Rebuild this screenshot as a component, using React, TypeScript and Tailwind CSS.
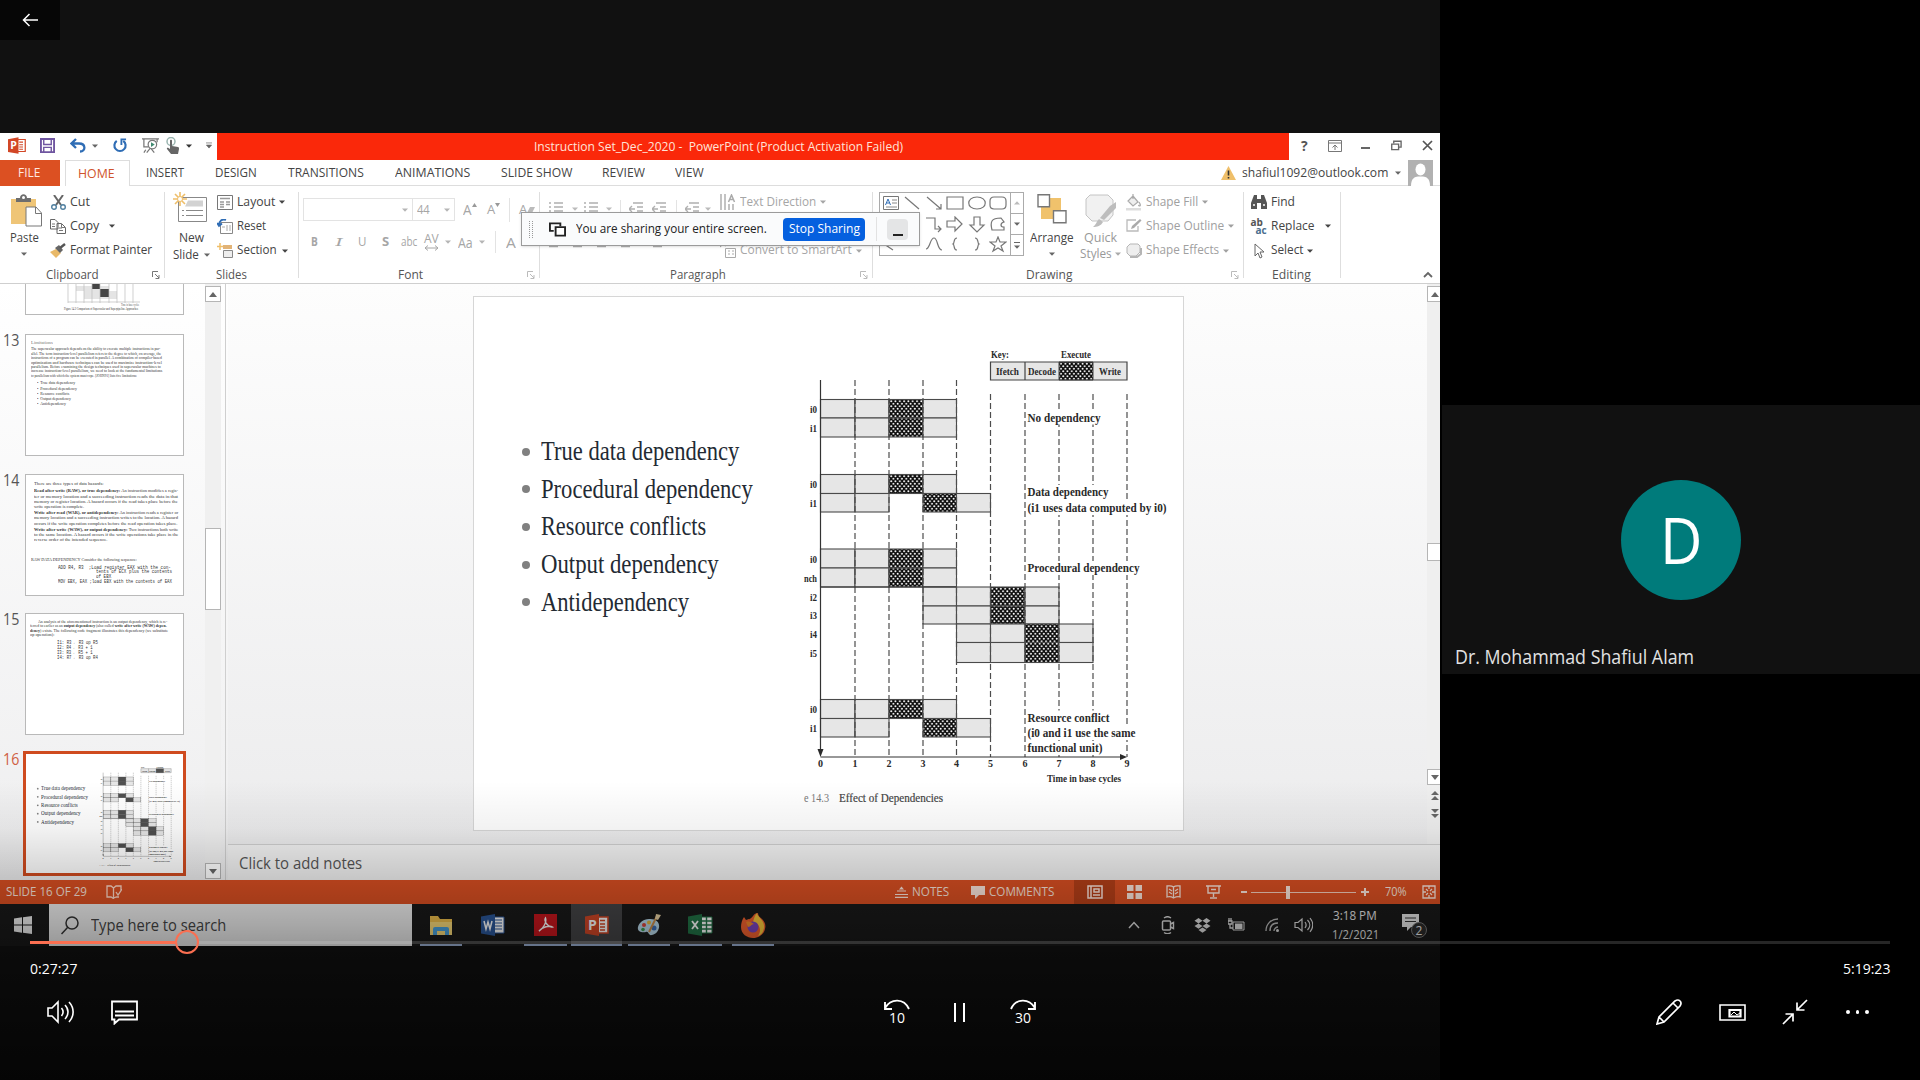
import React, { useLayoutEffect, useRef, useState } from "react";

type TProps = { w: number; c?: string; children: React.ReactNode };

/* Single line of text fitted to a known width. */
function T({ w, c = "", children }: TProps) {
  const ref = useRef<HTMLSpanElement>(null);
  const [k, setK] = useState(1);
  useLayoutEffect(() => {
    if (ref.current) setK(w / ref.current.offsetWidth);
  }, [w]);
  return (
    <span className={"block shrink-0 whitespace-nowrap " + c} style={{ width: w }}>
      <span ref={ref} className="inline-block origin-left" style={{ transform: `scaleX(${k})` }}>
        {children}
      </span>
    </span>
  );
}

type IProps = { w: number; h: number; c?: string; vb?: string; children: React.ReactNode };
function I({ w, h, c = "", vb, children }: IProps) {
  return (
    <svg width={w} height={h} viewBox={vb || `0 0 ${w} ${h}`} fill="none" className={"block shrink-0 " + c}>
      {children}
    </svg>
  );
}

function Caret({ c = "text-[#666]" }: { c?: string }) {
  return (
    <I w={6} h={4} c={c}>
      <path d="M0 .5h6L3 3.8z" fill="currentColor" />
    </I>
  );
}

function PptIcon({ w = 18, h = 17, c = "" }) {
  return (
    <I w={w} h={h} vb="0 0 24 22" c={c}>
      <path d="M12 3h11v16H12z" fill="#fff" stroke="#d24726" strokeWidth="1.6" />
      <path d="M15 6.500h5M15 10h5M15 13h5M15 16h5" stroke="#d24726" strokeWidth="1.5" />
      <path d="M0 2.500 14 0v22L0 19.500z" fill="#d24726" />
      <text x="3" y="16" fontSize="14" fontWeight="700" fill="#fff" fontFamily="Open Sans">P</text>
    </I>
  );
}

function TitleBar() {
  return (
    <div className="flex h-[27px] items-center bg-white">
      <div className="-mt-[2px] flex w-[217px] items-center">
        <PptIcon c="ml-[8px]" />
        <I w={15} h={15} vb="0 0 16 16" c="ml-[14px]">
          <path d="M1 1h14v14H1z" stroke="#6f55a0" strokeWidth="2" />
          <path d="M4 1v6h8V1M4 15v-5h8v5" stroke="#6f55a0" strokeWidth="1.500" />
        </I>
        <I w={16} h={15} c="ml-[15px]">
          <path d="M6 1 1.500 5.500 6 10M2 5.500h7c7 0 7 8 1 8" stroke="#2f6db5" strokeWidth="2.300" />
        </I>
        <span className="ml-[6px]"><Caret /></span>
        <I w={14} h={15} vb="0 0 15 15" c="ml-[15px]">
          <path d="M4 2.500A6 6 0 1 0 11 2.500" stroke="#2f6db5" strokeWidth="2.300" />
          <path d="M8 1h6M9 1v6" stroke="#2f6db5" strokeWidth="2" />
        </I>
        <I w={17} h={17} vb="0 0 18 17" c="ml-[15px]">
          <path d="M0 1.500h18M2 2v8h5M16 2v3M5 16l4-5 4 5M4 13l-2 3" stroke="#777" strokeWidth="1.300" />
          <circle cx="11" cy="7.500" r="4.500" stroke="#777" strokeWidth="1.300" fill="#fff" />
          <path d="M9.500 5v5l4-2.500z" fill="#3f8a70" />
        </I>
        <I w={14} h={17} c="ml-[7px]">
          <circle cx="5" cy="4.500" r="4" stroke="#9ab5b0" strokeWidth="1.500" />
          <path d="M4 3.500c0-1 2-1 2 0V9l6 1c1 0 1 1 1 2l-1 5H5l-4-5c-.5-1 .5-1.500 1.500-1L4 12z" fill="#666" />
        </I>
        <span className="ml-[6px]"><Caret c="text-[#333]" /></span>
        <I w={6} h={7} vb="0 0 7 7" c="ml-[14px]">
          <path d="M0 .500h7M.500 3h6L3.500 6.500z" stroke="#666" fill="#666" strokeWidth=".800" />
        </I>
      </div>
      <div className="flex h-full w-[1072px] items-center bg-[#fa280a]">
        <T w={369} c="ml-[317px] mt-[1px] text-[12.500px] text-[#ffe3d8]">Instruction Set_Dec_2020 -&nbsp; PowerPoint (Product Activation Failed)</T>
      </div>
      <div className="-mt-[2px] flex items-center">
        <T w={7} c="ml-[12px] text-[14px] font-bold leading-none text-[#555]">?</T>
        <I w={14} h={12} c="ml-[20px]">
          <path d="M.5.5h13v11H.5zM.5 3h13M7 10V5M4.500 7.500 7 5l2.500 2.500" stroke="#777" />
        </I>
        <div className="ml-[19px] mt-[5px] h-[2px] w-[9px] bg-[#666]" />
        <I w={11} h={11} vb="0 0 12 11" c="ml-[21px]">
          <path d="M3 3V.800h8v6.500H9M.800 4h7.500v6H.800z" stroke="#666" strokeWidth="1.500" />
        </I>
        <I w={11} h={11} c="ml-[20px]">
          <path d="m1 1 9 9M10 1l-9 9" stroke="#555" strokeWidth="1.700" />
        </I>
      </div>
    </div>
  );
}

function Tabs() {
  return (
    <div className="flex h-[26px] items-center bg-white text-[13px] text-[#444]">
      <div className="flex h-full w-[60px] items-center bg-[#dc5022] text-[#ffe9e0]">
        <T w={22} c="ml-[18px]">FILE</T>
      </div>
      <div className="ml-[5px] flex h-full w-[65px] items-center border-x border-t border-[#ddd] text-[#d0532b]">
        <T w={37} c="ml-[12px]">HOME</T>
      </div>
      <div className="flex h-full flex-1 items-center border-b border-[#ddd] pt-[1px]">
        <T w={38} c="ml-[16px]">INSERT</T>
        <T w={42} c="ml-[31px]">DESIGN</T>
        <T w={76} c="ml-[31px]">TRANSITIONS</T>
        <T w={75} c="ml-[31px]">ANIMATIONS</T>
        <T w={71} c="ml-[31px]">SLIDE SHOW</T>
        <T w={43} c="ml-[30px]">REVIEW</T>
        <T w={29} c="ml-[30px]">VIEW</T>
        <I w={15} h={14} c="ml-[517px]">
          <path d="M7.500 0 15 14H0z" fill="#efbf6a" />
          <path d="M7.500 4.500v5M7.500 11v1.600" stroke="#333" strokeWidth="1.600" />
        </I>
        <T w={146} c="-mt-[1px] ml-[6px]">shafiul1092@outlook.com</T>
        <span className="-mt-[1px] ml-[7px]"><Caret /></span>
        <I w={25} h={26} c="ml-[7px]">
          <path d="M0 0h25v26H0z" fill="#b1b1b1" />
          <ellipse cx="12.500" cy="9.500" rx="5" ry="6" fill="#fff" />
          <path d="M3 26c0-8 4-9 7-9.500h5c3 .5 7 1.500 7 9.500z" fill="#fff" />
        </I>
      </div>
    </div>
  );
}

function Group({ c, label, lw, lc, launcher, children }: { c: string; label: string; lw: number; lc: string; launcher?: string; children: React.ReactNode }) {
  return (
    <div className={"flex h-[97px] shrink-0 " + c}>
      <div className="flex min-w-0 flex-1 flex-col">
        <div className="flex h-[81px]">{children}</div>
        <div className="flex h-[16px] items-center text-[12.500px] leading-[16px] text-[#555]">
          <T w={lw} c={lc}>{label}</T>
          {launcher && (
            <I w={8} h={8} c={"ml-auto mr-[4px] " + launcher}>
              <path d="M.5 6V.5H6M3 3l4 4M7 4v3.500H3.500" stroke="currentColor" />
            </I>
          )}
        </div>
      </div>
      <div className="mt-[6px] h-[86px] w-px bg-[#dedede]" />
    </div>
  );
}

function Item({ w, text, caret, cc, children }: { w: number; text: string; caret?: boolean; cc?: string; children: React.ReactNode }) {
  return (
    <div className="flex h-[24.300px] items-center">
      <div className="mr-[4px] flex w-[16px] justify-center">{children}</div>
      <T w={w}>{text}</T>
      {caret && <span className={cc || "ml-[4px]"}><Caret c="text-current" /></span>}
    </div>
  );
}

const sunburst = "M7 0v14M0 7h14M2 2l10 10M12 2 2 12";

function ClipboardGroup() {
  return (
    <Group c="w-[165px]" label="Clipboard" lw={53} lc="ml-[46px]" launcher="text-[#777]">
      <div className="ml-[7px] flex w-[34px] flex-col items-center">
        <I w={31} h={33} c="ml-[4px] mt-[8px]">
          <path d="M0 5h25v25H0z" fill="#efc577" />
          <path d="M5 8V4h4c0-5 7-5 7 0h4v4z" fill="#6e6e6e" />
          <circle cx="12.500" cy="3.500" r="1.500" fill="#fff" />
          <path d="M15 13h10l5.500 6v13H15z" fill="#fff" stroke="#777" />
          <path d="M24.500 13v6.500H31" stroke="#777" />
        </I>
        <T w={29} c="mt-[2px] h-[18px] leading-[18px]">Paste</T>
        <span className="mt-[5px]"><Caret /></span>
      </div>
      <div className="ml-[9px] mt-[4px]">
        <Item w={20} text="Cut">
          <I w={15} h={15}>
            <path d="m3 0 7 10M12 0 5 10" stroke="#666" strokeWidth="2" />
            <circle cx="3" cy="12" r="2.300" stroke="#4f7f9f" strokeWidth="1.400" />
            <circle cx="12" cy="12" r="2.300" stroke="#4f7f9f" strokeWidth="1.400" />
          </I>
        </Item>
        <Item w={29} text="Copy" caret cc="ml-[10px]">
          <I w={16} h={15}>
            <path d="M.5.5H5l3 3V10H.5zM7 4.500h4.500l4 4v6H7z" fill="#fff" stroke="#666" />
            <path d="M2 5h3M2 7.500h3M9 9h3M9 11.500h4M11.500 5v3.500H15" stroke="#777" />
          </I>
        </Item>
        <Item w={82} text="Format Painter">
          <I w={16} h={15}>
            <path d="m0 9 6-3 5 4-5 5z" fill="#e9b968" />
            <path d="m5 5 4-3 4 5-3 3z" fill="#666" />
            <path d="m10 5 5-4" stroke="#555" strokeWidth="2.500" />
          </I>
        </Item>
      </div>
    </Group>
  );
}

function SlidesGroup() {
  return (
    <Group c="w-[134px]" label="Slides" lw={31} lc="ml-[51px]">
      <div className="ml-[8px] flex w-[34px] flex-col">
        <I w={34} h={31} c="mt-[6px]">
          <path d="M5.500 5.500h28v24h-28z" fill="#fff" stroke="#888" />
          <path d="M15 8.500h15v6H12z" fill="#d2d2d2" />
          <path d="M9 18.500h2M13 18.500h17M9 23.500h2M13 23.500h17" stroke="#888" />
          <path d={sunburst} stroke="#efbf6a" strokeWidth="1.600" />
          <circle cx="7" cy="7" r="2.500" fill="#fff" stroke="#efbf6a" />
        </I>
        <T w={25} c="ml-[6px] mt-[6px] h-[17px] leading-[18px]">New</T>
        <div className="flex items-center">
          <T w={26} c="h-[17px] leading-[18px]">Slide</T>
          <span className="ml-[5px]"><Caret /></span>
        </div>
      </div>
      <div className="ml-[10px] mt-[4px]">
        <Item w={38} text="Layout" caret>
          <I w={16} h={15}>
            <path d="M.5.500h15v14H.5z" fill="#fff" stroke="#777" />
            <path d="M3 3.500h10M3 7h4M9 7h4M3 9.500h4M9 9.500h4M3 12h4" stroke="#999" strokeWidth="1.300" />
          </I>
        </Item>
        <Item w={29} text="Reset">
          <I w={16} h={15}>
            <path d="M3.500 3.500h12v11h-12z" fill="#fff" stroke="#888" />
            <path d="M10 6v6M13 6v6M5 8h3" stroke="#aaa" />
            <path d="M9 1C5-.5 2 2 2 6M0 4l2 3 3-2.500" stroke="#2f6db5" strokeWidth="1.800" />
          </I>
        </Item>
        <Item w={40} text="Section" caret cc="ml-[5px]">
          <I w={16} h={16}>
            <path d="M6 3h9M6 5h9" stroke="#d99a4a" strokeWidth="1.500" />
            <path d="M6.500 7.500h9v7h-9z" stroke="#888" fill="#eee" />
            <path d="M3 0v7M0 3.500h6" stroke="#efbf6a" strokeWidth="1.500" />
          </I>
        </Item>
      </div>
    </Group>
  );
}

function FontGroup() {
  return (
    <Group c="w-[241px] text-[#a6a6a6]" label="Font" lw={25} lc="ml-[99px]" launcher="text-[#bbb]">
      <div className="ml-[4px] mt-[12px] flex flex-col">
        <div className="flex h-[23px] items-center">
          <div className="flex h-full w-[110px] items-center justify-end border border-[#e3e3e3] pr-[4px]"><Caret c="text-[#b5b5b5]" /></div>
          <div className="flex h-full w-[42px] items-center border-y border-r border-[#e3e3e3]">
            <T w={13} c="ml-[4px] text-[12px]">44</T>
            <span className="ml-[14px]"><Caret c="text-[#b5b5b5]" /></span>
          </div>
          <T w={9} c="ml-[8px] text-[15px]">A</T>
          <I w={5} h={4} c="mb-[9px]"><path d="M0 4 2.500 0 5 4z" fill="#999" /></I>
          <T w={8} c="ml-[10px] text-[13px]">A</T>
          <I w={5} h={4} c="mb-[9px]"><path d="M0 0h5L2.500 4z" fill="#999" /></I>
          <div className="ml-[9px] h-[24px] w-px bg-[#e3e3e3]" />
          <T w={8} c="ml-[9px] text-[13px]">A</T>
          <I w={8} h={6}><path d="M3 0h5L5 6H0z" fill="#bbb" /></I>
        </div>
        <div className="mt-[9px] flex h-[24px] items-center text-[13px]">
          <T w={7} c="ml-[8px] font-bold">B</T>
          <T w={7} c="ml-[17px] font-serif italic">I</T>
          <T w={8} c="ml-[16px] underline">U</T>
          <T w={7} c="ml-[16px] font-bold">S</T>
          <T w={16} c="ml-[12px] line-through">abc</T>
          <div className="ml-[7px] flex flex-col items-center">
            <T w={15} c="text-[12px] leading-[12px]">AV</T>
            <I w={15} h={6}><path d="M1 3h13M4 .5 1 3l3 2.500M11 .5 14 3l-3 2.500" stroke="#a6a6a6" /></I>
          </div>
          <span className="ml-[6px]"><Caret c="text-[#b5b5b5]" /></span>
          <T w={15} c="ml-[7px] text-[14px]">Aa</T>
          <span className="ml-[6px]"><Caret c="text-[#b5b5b5]" /></span>
          <div className="ml-[10px] h-[22px] w-px bg-[#e3e3e3]" />
          <T w={10} c="ml-[10px] text-[14px]">A</T>
        </div>
      </div>
    </Group>
  );
}

function Lines({ c, d = "M5 1h9M5 5h9M5 9h9M5 13h9M0 1h2M0 5h2M0 9h2M0 13h2" }: { c: string; d?: string }) {
  return (
    <I w={15} h={14} c={c}>
      <path d={d} stroke="#b0b0b0" strokeWidth="1.300" />
    </I>
  );
}

function ParagraphGroup() {
  const indent = "M4 1h10M8 5h6M8 9h6M4 13h10M6 7H0M3 4 0 7l3 3";
  const para = "M0 1h14M0 5h9M0 9h14M0 12.500h9";
  return (
    <Group c="w-[333px] text-[#a6a6a6]" label="Paragraph" lw={56} lc="ml-[130px]" launcher="text-[#bbb]">
      <div className="ml-[9px] mt-[15px] w-[168px]">
        <div className="flex h-[16px] items-center">
          <Lines c="" />
          <span className="ml-[8px]"><Caret c="text-[#bbb]" /></span>
          <Lines c="ml-[6px]" />
          <span className="ml-[7px]"><Caret c="text-[#bbb]" /></span>
          <div className="ml-[8px] h-[18px] w-px bg-[#e3e3e3]" />
          <Lines c="ml-[8px]" d={indent} />
          <Lines c="ml-[8px]" d={indent} />
          <div className="ml-[9px] h-[18px] w-px bg-[#e3e3e3]" />
          <Lines c="ml-[8px]" d={indent} />
          <span className="ml-[5px]"><Caret c="text-[#bbb]" /></span>
        </div>
        <div className="mt-[17px] flex h-[14px] items-center gap-[9px]">
          <Lines c="" d={para} />
          <Lines c="" d={para} />
          <Lines c="" d={para} />
          <Lines c="" d={para} />
          <Lines c="ml-[8px]" d={para} />
        </div>
      </div>
      <div className="ml-[3px] mt-[4px]">
        <Item w={76} text="Text Direction" caret>
          <I w={16} h={16}>
            <path d="M1 0v16M5 0v16M9 10v6M13 10v6" stroke="#aaa" strokeWidth="1.400" />
            <path d="m8.500 8 3-7 3 7M9.500 5.500h4" stroke="#aaa" strokeWidth="1.500" />
          </I>
        </Item>
        <div className="h-[24.300px]" />
        <Item w={112} text="Convert to SmartArt" caret>
          <I w={16} h={15}>
            <path d="M5.500 5.500h10v9h-10zM8 8h2M12 8h2M8 11h2M12 11h2" stroke="#aaa" />
            <path d="M0 4c1-4 4-4 6-1" stroke="#aaa" strokeWidth="2" />
          </I>
        </Item>
      </div>
    </Group>
  );
}

const shapes: string[][] = [
  ["", "M2 2 16 14", "M2 2l14 12M16 9v5h-5", "M1 2h16v12H1z", "M9 2c11 0 11 12 0 12S-2 2 9 2z", "M5 2h8q4 0 4 4v4q0 4-4 4H5q-4 0-4-4V6q0-4 4-4z"],
  ["M2 2v12", "M2 2h8v11h6", "M1 2h9v11h6M13 10l3 3-3 3", "M1 5h8V1l7 7-7 7v-4H1z", "M6 1h6v8h4l-7 7-7-7h4z", "M3 14h12v-3c-4 0-4-4 0-5L12 2C2 2 1 6 3 14z"],
  ["M5 2c8 0 8 6 0 8l6 4", "M2 2", "M1 13C5 13 5 2 9 2s3 12 8 12", "M11 2c-4 0-2 5-4 6 2 1 0 6 4 6", "M7 2c4 0 2 5 4 6-2 1 0 6-4 6", "m9 1 2 5h6l-5 4 2 5-5-3-5 3 2-5-5-4h6z"],
];

function DrawingGroup() {
  return (
    <Group c="w-[371px]" label="Drawing" lw={46} lc="ml-[153px]" launcher="text-[#bbb]">
      <div className="ml-[6px] mt-[6px] flex h-[64px] w-[145px] border border-[#ababab] bg-white">
        <div className="flex w-[130px] flex-col justify-between py-[2px]">
          {shapes.map((row, r) => (
            <div key={r} className="flex justify-between pl-[2px] pr-[3px]">
              {row.map((d, i) =>
                d ? (
                  <I key={i} w={18} h={17}><path d={d} stroke="#777" strokeWidth="1.200" /></I>
                ) : (
                  <I key={i} w={18} h={17}>
                    <path d="M1.500 1.500h15v13h-15z" stroke="#777" />
                    <path d="M3.500 10 6 4l2.500 6M4.500 8h3" stroke="#2f6db5" />
                    <path d="M10 5h5M10 8h5M4 12h11" stroke="#888" />
                  </I>
                )
              )}
            </div>
          ))}
        </div>
        <div className="flex flex-1 flex-col border-l border-[#ababab]">
          <div className="flex flex-1 items-center justify-center"><Caret c="rotate-180 text-[#bbb]" /></div>
          <div className="flex flex-1 items-center justify-center border-y border-[#ababab]"><Caret /></div>
          <div className="flex flex-1 flex-col items-center justify-center gap-[2px]">
            <div className="h-px w-[6px] bg-[#666]" />
            <Caret />
          </div>
        </div>
      </div>
      <div className="ml-[6px] flex w-[44px] flex-col items-center">
        <I w={30} h={30} c="mt-[8px]">
          <path d="M12 4h12v13H12zM4 13h12v12H4z" fill="#f0c26c" />
          <path d="M1 .700h11.500v12H1zM16.500 16.700H29v12H16.500z" fill="#fff" stroke="#777" strokeWidth="1.400" />
        </I>
        <T w={44} c="mt-[5px] h-[18px] leading-[18px]">Arrange</T>
        <span className="mt-[5px]"><Caret /></span>
      </div>
      <div className="ml-[6px] flex w-[44px] flex-col text-[#999]">
        <I w={32} h={35} c="ml-[5px] mt-[8px]">
          <path d="M5 1h18l5 5v15l-5 6H7l-6-6V5z" fill="#f1f1f1" stroke="#c4c4c4" />
          <path d="M31 8v6L19 26l-4-2 10-12zM14 25l4 3c-2 4-6 5-10 5 3-2 3-5 6-8z" fill="#bdbdbd" />
        </I>
        <T w={33} c="ml-[4px] h-[17px] leading-[18px]">Quick</T>
        <div className="-mt-[1px] flex items-center">
          <T w={32} c="h-[17px] leading-[18px]">Styles</T>
          <span className="ml-[3px]"><Caret c="text-[#aaa]" /></span>
        </div>
      </div>
      <div className="ml-[2px] mt-[4px] text-[#a0a0a0]">
        <Item w={52} text="Shape Fill" caret>
          <I w={16} h={17}>
            <path d="m7 2 5 6-5 4-5-5zM7 5V0M13 8c3 4 0 5-.5 3" stroke="#aaa" strokeWidth="1.200" fill="#eee" />
            <path d="M0 14h15v2.500H0z" fill="#ddd" />
          </I>
        </Item>
        <Item w={78} text="Shape Outline" caret>
          <I w={16} h={15}>
            <path d="M12 7v5H1V1h9" stroke="#bbb" strokeWidth="1.300" />
            <path d="m5 10 1-3 8-7 1.500 1.500L8 9z" fill="#aaa" />
          </I>
        </Item>
        <Item w={73} text="Shape Effects" caret>
          <I w={16} h={15}>
            <path d="M4 1h8l2 2v6l-4 4H4l-3-3V4z" fill="#eee" stroke="#b5b5b5" />
            <path d="M15 5v6l-4 3H4" stroke="#b5b5b5" strokeWidth="2" />
          </I>
        </Item>
      </div>
    </Group>
  );
}

function EditingGroup() {
  return (
    <Group c="w-[97px]" label="Editing" lw={39} lc="ml-[28px]">
      <div className="ml-[7px] mt-[4px]">
        <Item w={24} text="Find">
          <I w={16} h={14}>
            <path d="M3 0h3v4h4V0h3l3 8v6h-6V8H6v6H0V8z" fill="#555" />
            <path d="M2 10h2M12 10h2" stroke="#fff" strokeWidth="1.500" />
          </I>
        </Item>
        <Item w={44} text="Replace" caret cc="ml-[10px]">
          <div className="text-[10px] font-bold leading-[8px] text-[#555]">
            <div className="-ml-[1px]">ab</div>
            <div className="pl-[4px] text-[#4c6f8f]">ac</div>
          </div>
        </Item>
        <Item w={33} text="Select" caret cc="ml-[3px]">
          <I w={10} h={16}>
            <path d="M1 1v12l3-3 2 5 2-1-2-5h4z" stroke="#666" fill="#fff" />
          </I>
        </Item>
      </div>
    </Group>
  );
}

function ShareBar() {
  return (
    <div className="absolute left-[521px] top-[79px] flex h-[34px] w-[399px] items-center border border-[#9b9b9b] bg-[#fafbfc] shadow-sm">
      <div className="ml-[7px] h-[17px] w-[4px] border-x border-dotted border-[#999]" />
      <I w={17} h={15} vb="0 0 18 15" c="ml-[16px]">
        <path d="M12 4V1H1v8h4" stroke="#222" strokeWidth="2" />
        <path d="M7 5h10v9H7z" stroke="#222" strokeWidth="2" fill="#fff" />
      </I>
      <T w={191} c="ml-[10px] text-[12.500px] font-medium text-[#222]">You are sharing your entire screen.</T>
      <div className="ml-[16px] flex h-[23px] w-[82px] items-center justify-center rounded-[4px] bg-[#0560df] text-white">
        <T w={71} c="text-[12.500px]">Stop Sharing</T>
      </div>
      <div className="ml-[11px] h-[24px] w-px bg-[#e2e2e2]" />
      <div className="ml-[10px] flex h-[21px] w-[21px] items-end justify-center rounded-[4px] bg-[#e4e5e6] pb-[4px]">
        <div className="h-[2px] w-[10px] bg-[#222]" />
      </div>
    </div>
  );
}

const X = [820.5, 855, 889, 923, 956.5, 990.5, 1025, 1059, 1093, 1127];
/* start column, top, bottom, whether execute is delayed by one cycle */
const bars: [number, number, number, boolean][] = [
  [0, 399.5, 418, false], [0, 418, 437, false],
  [0, 474.5, 493.5, false], [0, 493.5, 512, true],
  [0, 549, 568, false], [0, 568, 587, false],
  [3, 587, 606, false], [3, 606, 624, false],
  [4, 624, 642.5, false], [4, 642.5, 662.5, false],
  [0, 699.5, 718.5, false], [0, 718.5, 737, true],
];
const rowLabels: [string, number][] = [["i0", 412.5], ["i1", 431.5], ["i0", 487.5], ["i1", 506.5], ["i0", 563], ["nch", 582], ["i2", 600.5], ["i3", 619], ["i4", 638], ["i5", 656.5], ["i0", 713], ["i1", 731.5]];
const notes: [string, number, number][] = [
  ["No dependency", 421.5, 73], ["Data dependency", 496, 81], ["(i1 uses data computed by i0)", 512, 139],
  ["Procedural dependency", 572, 112], ["Resource conflict", 721.5, 82], ["(i0 and i1 use the same", 737, 108], ["functional unit)", 752, 75],
];

function Chart() {
  return (
    <svg width="710" height="534" viewBox="473 296 710 534" className="absolute left-0 top-0" fontFamily="Liberation Serif" fontWeight="700" fontSize="11" fill="#2a2a2a">
      <defs>
        <pattern id="weave" width="4.300" height="5" patternUnits="userSpaceOnUse">
          <rect width="4.300" height="5" fill="#0c0c0c" />
          <ellipse cx="1.100" cy="1.250" rx=".95" ry="1" fill="#fff" />
          <ellipse cx="3.250" cy="3.750" rx=".95" ry="1" fill="#fff" />
        </pattern>
      </defs>
      {bars.map(([s, y0, y1, d], i) => {
        const e = s + 2 + (d ? 1 : 0);
        return (
          <g key={i} stroke="#4a4a4a" strokeWidth="1.100" fill="#e6e6e6">
            <rect x={X[s]} y={y0} width={X[s + 1] - X[s]} height={y1 - y0} />
            <rect x={X[s + 1]} y={y0} width={X[s + 2] - X[s + 1]} height={y1 - y0} />
            <rect x={X[e]} y={y0} width={X[e + 1] - X[e]} height={y1 - y0} fill="url(#weave)" />
            <rect x={X[e + 1]} y={y0} width={X[e + 2] - X[e + 1]} height={y1 - y0} />
          </g>
        );
      })}
      {X.slice(1).map((x, i) => (
        <path key={x} d={`M${x} ${i < 4 ? 380 : 394}V757`} stroke="#4d4d4d" strokeWidth="1.200" strokeDasharray="6 3" />
      ))}
      <path d="M820.500 380V753M820.500 757H1122M820.500 587H956" stroke="#333" strokeWidth="1.200" />
      <path d="m817.500 749 3 8 3-8zM1120 754l7 3-7 3z" />
      {notes.map(([t, y, w]) => (
        <g key={t}>
          <rect x="1027.500" y={y - 11} width={w} height="14" fill="#fff" />
          <text x="1027.500" y={y} fontSize="12.500" textLength={w} lengthAdjust="spacingAndGlyphs">{t}</text>
        </g>
      ))}
      {rowLabels.map(([t, y]) => (
        <text key={y} x={t === "nch" ? 804 : 810} y={y} textLength={t === "nch" ? 13 : 7} lengthAdjust="spacingAndGlyphs">{t}</text>
      ))}
      {X.map((x, i) => <text key={i} x={x} y="767" textAnchor="middle" fontSize="10">{i}</text>)}
      <text x="991" y="357.500" textLength="18" lengthAdjust="spacingAndGlyphs">Key:</text>
      <text x="1061" y="357.500" textLength="30" lengthAdjust="spacingAndGlyphs">Execute</text>
      <path d="M990.500 362H1127v18H990.500zM1025 362v18" fill="#e6e6e6" stroke="#444" strokeWidth="1.200" />
      <path d="M1059 362h34v18h-34z" fill="url(#weave)" stroke="#444" />
      <text x="996" y="375" textLength="23" lengthAdjust="spacingAndGlyphs">Ifetch</text>
      <text x="1028" y="375" textLength="28" lengthAdjust="spacingAndGlyphs">Decode</text>
      <text x="1099" y="375" textLength="22" lengthAdjust="spacingAndGlyphs">Write</text>
      <text x="1047" y="782" textLength="74" lengthAdjust="spacingAndGlyphs">Time in base cycles</text>
      <g fontWeight="400" fontSize="12">
        <text x="804" y="801.500" fill="#777" textLength="25" lengthAdjust="spacingAndGlyphs">e 14.3</text>
        <text x="839" y="801.500" fill="#444" stroke="#444" strokeWidth=".2" textLength="104" lengthAdjust="spacingAndGlyphs">Effect of Dependencies</text>
      </g>
    </svg>
  );
}

const bullets: [string, number][] = [["True data dependency", 198], ["Procedural dependency", 212], ["Resource conflicts", 165], ["Output dependency", 178], ["Antidependency", 148]];

function Slide() {
  return (
    <div className="relative h-[534px] w-[710px] bg-white">
      <Chart />
      <ul className="pl-[49px] pt-[137px] font-['Liberation_Serif',serif] text-[27px] text-[#232a33]">
        {bullets.map(([t, w]) => (
          <li key={t} className="flex h-[37.600px] items-center">
            <div className="mr-[11px] size-[8px] rounded-full bg-[#808080]" />
            <T w={w} c="leading-none">{t}</T>
          </li>
        ))}
      </ul>
    </div>
  );
}

const s13: [string, number][] = [
  ["The superscalar approach depends on the ability to execute multiple instructions in par-", 129],
  ["allel. The term instruction-level parallelism refers to the degree to which, on average, the", 130],
  ["instructions of a program can be executed in parallel. A combination of compiler-based", 131],
  ["optimization and hardware techniques can be used to maximize instruction-level", 131],
  ["parallelism. Before examining the design techniques used in superscalar machines to", 130],
  ["increase instruction-level parallelism, we need to look at the fundamental limitations", 131],
  ["to parallelism with which the system must cope. [JOHN91] lists five limitations:", 106],
];
const s14: [string, string, number][] = [
  ["Read after write (RAW), or true dependency:", " An instruction modifies a regis-", 144],
  ["", "ter or memory location and a succeeding instruction reads the data in that", 144],
  ["", "memory or register location. A hazard occurs if the read takes place before the", 144],
  ["", "write operation is complete.", 50],
  ["Write after read (WAR), or antidependency:", " An instruction reads a register or", 144],
  ["", "memory location and a succeeding instruction writes to the location. A hazard", 144],
  ["", "occurs if the write operation completes before the read operation takes place.", 143],
  ["Write after write (WAW), or output dependency:", " Two instructions both write", 144],
  ["", "to the same location. A hazard occurs if the write operations take place in the", 144],
  ["", "reverse order of the intended sequence.", 73],
];

function Row({ n, c, on, children }: { n: string; c: string; on?: boolean; children?: React.ReactNode }) {
  return (
    <div className={"flex shrink-0 " + c}>
      <div className={"w-[23px] pl-[3px] " + (on ? "text-[#cf6043]" : "text-[#555]")}>
        <T w={16} c={"text-[16px] leading-none " + (on ? "" : "-mt-[2px]")}>{n}</T>
      </div>
      {on ? (
        <div className="h-[125px] w-[163px] overflow-hidden border-[3px] border-[#cf4b1f] bg-white">{children}</div>
      ) : (
        <div className="ml-[2px] h-[122px] w-[159px] overflow-hidden border border-[#b9b9b9] bg-white font-['Liberation_Serif',serif] text-[4.500px] leading-[4.400px] text-[#333]">
          {children}
        </div>
      )}
    </div>
  );
}

function ScrollButton({ c = "", up }: { c?: string; up?: boolean }) {
  return (
    <div className={"flex h-[16px] w-[16px] items-center justify-center border border-[#b5b5b5] bg-white " + c}>
      <I w={8} h={5} c={up ? "" : "rotate-180"}><path d="M0 5 4 0l4 5z" fill="#666" /></I>
    </div>
  );
}

function Thumbnails() {
  return (
    <div className="flex w-[228px] shrink-0 bg-linear-to-b from-white to-[#eeeeef]">
      <div className="flex w-[205px] flex-col overflow-hidden">
        <div className="ml-[25px] h-[31px] w-[159px] overflow-hidden border-x border-b border-[#b9b9b9] bg-white">
          <I w={157} h={30}>
            <path d="M50 2h33v5H50zM58 7h33v8H58z" fill="#e4e4e4" />
            <path d="M66 0h8v5h-8zM74 5h9v8h-9z" fill="#444" />
            <path d="M42 0v19M50 0v19M58 0v19M66 0v19M74 0v19M83 0v19M91 0v19M99 0v19M107 0v19M42 18h72" stroke="#bbb" strokeWidth=".7" />
            <text x="95" y="22" fontSize="4" fill="#555" fontFamily="Liberation Serif" textLength="18" lengthAdjust="spacingAndGlyphs">Time in base cycles</text>
            <text x="38" y="26" fontSize="4" fill="#333" fontFamily="Liberation Serif" textLength="74" lengthAdjust="spacingAndGlyphs">Figure 14.2 Comparison of Superscalar and Superpipeline Approaches</text>
          </I>
        </div>
        <Row n="13" c="mt-[19px]">
          <div className="px-[5px] pt-[6px]">
            <T w={22} c="mb-[2px] text-[#777]">Limitations</T>
            {s13.map(([t, w]) => <T key={t} w={w}>{t}</T>)}
            <div className="ml-[6px] mt-[2px] leading-[5.300px]">
              <T w={38}>•&nbsp; True data dependency</T>
              <T w={40}>•&nbsp; Procedural dependency</T>
              <T w={32}>•&nbsp; Resource conflicts</T>
              <T w={34}>•&nbsp; Output dependency</T>
              <T w={29}>•&nbsp; Antidependency</T>
            </div>
          </div>
        </Row>
        <Row n="14" c="mt-[18px]">
          <div className="pl-[8px] pt-[7px]">
            <T w={69} c="mb-[2px]">There are three types of data hazards:</T>
            {s14.map(([b, t, w]) => (
              <T key={t} w={w} c={b ? "mt-[1px] leading-[5.200px]" : "leading-[5.200px]"}><b>{b}</b>{t}</T>
            ))}
            <T w={106} c="-ml-[3px] mt-[16px]">RAW DATA DEPENDENCY Consider the following sequence:</T>
            <div className="ml-[24px] mt-[3px] font-['Liberation_Mono',monospace] leading-[4.600px]">
              <T w={113}>ADD R4, R3&nbsp; ;Load register EAX with the con-</T>
              <T w={76} c="ml-[38px]">tents of ECX plus the contents</T>
              <T w={15} c="ml-[38px]">of EBX</T>
              <T w={114}>MOV EBX, EAX ;load EBX with the contents of EAX</T>
            </div>
          </div>
        </Row>
        <Row n="15" c="mt-[17px]">
          <div className="pl-[4px] pt-[6px]">
            <T w={129} c="ml-[8px]">An analysis of the aforementioned instruction is an output dependency, which is re-</T>
            <T w={137}>ferred to earlier as an <b>output dependency</b> (also called <b>write after write (WAW) depen-</b></T>
            <T w={138}><b>dency</b>) exists. The following code fragment illustrates this dependency (we substitute</T>
            <T w={24}>op operation):</T>
            <div className="ml-[27px] mt-[2px] font-['Liberation_Mono',monospace] leading-[5.200px]">
              <T w={41}>I1: R3 ← R3 op R5</T>
              <T w={36}>I2: R4 ← R3 + 1</T>
              <T w={36}>I3: R3 ← R5 + 1</T>
              <T w={41}>I4: R7 ← R3 op R4</T>
            </div>
          </div>
        </Row>
        <Row n="16" c="mt-[16px]" on>
          <div className="h-[534px] w-[710px] origin-top-left scale-[0.222]"><Slide /></div>
        </Row>
      </div>
      <div className="flex w-[16px] flex-col bg-[#f0f0f0] pt-[2px]">
        <ScrollButton up />
        <div className="mt-[226px] h-[82px] border border-[#b5b5b5] bg-white" />
        <ScrollButton c="mt-[253px]" />
      </div>
      <div className="ml-[4px] w-px bg-[#cfcfcf]" />
    </div>
  );
}

function Editor() {
  return (
    <div className="flex min-w-0 flex-1 flex-col">
      <div className="flex h-[561px] border-b border-[#cfcfcf] bg-linear-to-b from-[#fdfdfd] to-[#ececed]">
        <div className="ml-[246px] mt-[13px] h-[533px] w-[709px] overflow-hidden shadow-[0_0_0_1px_#d6d6d6]">
          <div className="-ml-[1px] -mt-[1px]"><Slide /></div>
        </div>
        <div className="ml-auto flex w-[13px] flex-col bg-[#efefef] pt-[2px]">
          <ScrollButton up />
          <div className="mt-[241px] h-[18px] w-[16px] border border-[#b5b5b5] bg-white" />
          <ScrollButton c="mt-[208px]" />
          <I w={14} h={12} c="mt-[5px]"><path d="m4 5 4-4 4 4zM4 10l4-4 4 4z" fill="#666" /></I>
          <I w={14} h={12} c="mt-[6px]"><path d="m4 1 4 4 4-4zM4 6l4 4 4-4z" fill="#666" /></I>
        </div>
      </div>
      <div className="flex flex-1 items-center bg-[#f2f2f2] text-[16px] text-[#555]">
        <T w={123} c="ml-[11px]">Click to add notes</T>
      </div>
    </div>
  );
}

function StatusBar() {
  return (
    <div className="flex h-[24px] items-center bg-[#da4f22] text-[12px] text-[#fbe5db]">
      <T w={81} c="ml-[6px]">SLIDE 16 OF 29</T>
      <I w={16} h={14} c="ml-[19px]">
        <path d="M7.500 3 5 1H1v11h4l2.500 1.500zM7.500 3 10 1h5v5M7.500 13l3-1H13M10 7l2 3 4-6" stroke="#ffd9c8" strokeWidth="1.300" />
      </I>
      <I w={13} h={12} c="ml-[773px]">
        <path d="m4 3.500 2.500-3 2.500 3z" fill="#fbe5db" />
        <path d="M2 5h9M0 8.500h13M0 11.300h13" stroke="#fbe5db" strokeWidth="1.200" />
      </I>
      <T w={37} c="ml-[4px]">NOTES</T>
      <I w={14} h={13} c="ml-[22px]"><path d="M0 0h14v9H8l-4 4V9H0z" fill="#fbe5db" /></I>
      <T w={65} c="ml-[4px]">COMMENTS</T>
      <div className="ml-[20px] flex h-full w-[41px] items-center justify-center bg-[#b53f18]">
        <I w={16} h={14}><path d="M1 1h14v12H1zM4 1v12M7 4h5v3H7zM6 10h7" stroke="#fbe5db" strokeWidth="1.500" /></I>
      </div>
      <I w={15} h={14} c="ml-[12px]"><path d="M0 0h6.500v6H0zM8.500 0H15v6H8.500zM0 8h6.500v6H0zM8.500 8H15v6H8.500z" fill="#fbe5db" /></I>
      <I w={15} h={14} c="ml-[24px]"><path d="M7.500 2C5 0 3 1 1 1v11c3-1 5 0 6.500 1 2-1 4-2 6.500-1V1c-2 0-4-1-6.500 1v11M3 4l3 2M3 7l3 2M12 4 9 6M12 7 9 9" stroke="#fbe5db" strokeWidth="1.300" /></I>
      <I w={15} h={14} c="ml-[25px]"><path d="M0 1h15M2 1v7h11V1M7.500 8v4M4 13h7M5 4.500h5" stroke="#fbe5db" strokeWidth="1.400" /></I>
      <div className="ml-[20px] h-[2px] w-[6px] bg-[#fbe5db]" />
      <div className="ml-[4px] flex h-[13px] w-[105px] items-center">
        <div className="h-px w-[35px] bg-[#f6cdbc]" />
        <div className="h-[13px] w-[4px] bg-[#fbe5db]" />
        <div className="h-px flex-1 bg-[#f6cdbc]" />
      </div>
      <I w={8} h={8} c="ml-[5px]"><path d="M4 0v8M0 4h8" stroke="#fbe5db" strokeWidth="2" /></I>
      <T w={22} c="ml-[16px]">70%</T>
      <I w={14} h={14} c="ml-[15px]"><path d="M1 1h12v12H1zM7 1v3M7 10v3M1 7h3M10 7h3M4 4l2 2M10 4 8 6M4 10l2-2M10 10 8 8" stroke="#fbe5db" strokeWidth="1.300" /></I>
    </div>
  );
}

function TaskApp({ c, line, children }: { c: string; line?: string; children: React.ReactNode }) {
  return (
    <div className={"flex h-full shrink-0 flex-col items-center justify-between " + c}>
      <div className="flex h-[40px] items-center pt-[2px]">{children}</div>
      <div className={"h-[2px] w-full " + (line ?? "bg-[#9fb4d8]")} />
    </div>
  );
}

function Taskbar() {
  return (
    <div className="flex h-[42px] items-center bg-[#191919] text-[#e8e8e8]">
      <I w={18} h={18} c="ml-[14px]">
        <path d="M0 2.500 8 1.300v7.200H0zM9 1.200 18 0v8.500H9zM0 9.500h8v7.200L0 15.500zM9 9.500h9V18l-9-1.200z" fill="#f0f0f0" />
      </I>
      <div className="ml-[17px] flex h-full w-[363px] items-center bg-[#efefef] text-[16px] text-[#444]">
        <I w={18} h={19} c="ml-[12px]">
          <circle cx="11" cy="7" r="6" stroke="#333" strokeWidth="1.500" />
          <path d="m7 11-6.500 7" stroke="#333" strokeWidth="1.500" />
        </I>
        <T w={135} c="ml-[12px]">Type here to search</T>
      </div>
      <TaskApp c="ml-[8px] w-[42px]">
        <I w={24} h={21}>
          <path d="M1 1h8l2 3h12v16H1z" fill="#f0c04c" /><path d="M1 7h22v13H1z" fill="#fbdc7a" />
          <path d="M4 20v-6q0-2 2-2h12q2 0 2 2v6h-4v-4H8v4z" fill="#4aa3df" />
        </I>
      </TaskApp>
      <TaskApp c="ml-[10px] w-[42px]" line="bg-transparent">
        <I w={24} h={22}>
          <path d="M12 3h11v16H12z" fill="#fff" stroke="#2b579a" /><path d="M14 6h7M14 9h7M14 12h7M14 15h7" stroke="#2b579a" />
          <path d="M0 2.500 14 0v22L0 19.500z" fill="#2b579a" />
          <path d="m3 7 2 8 2-7 2 7 2-8" stroke="#fff" strokeWidth="1.500" />
        </I>
      </TaskApp>
      <TaskApp c="ml-[10px] w-[43px]">
        <I w={23} h={22}>
          <path d="M0 0h23v22H0z" fill="#c8161d" />
          <path d="M5 17c4-2 8-9 6.500-13-2 3 3 10 7 9-3-2-10 0-13.500 4z" stroke="#fff" strokeWidth="1.400" />
        </I>
      </TaskApp>
      <div className="ml-[4px] h-full bg-[#444446]"><TaskApp c="w-[51px]"><PptIcon w={24} h={22} /></TaskApp></div>
      <TaskApp c="ml-[6px] w-[42px]">
        <I w={25} h={23}>
          <path d="M12 5c14-1 12 14 3 16-4 1-3-4-6-3-5 1-9-1-8-5s5-8 11-8z" fill="#b9d9ea" />
          <circle cx="7" cy="11" r="2" fill="#d8453b" /><circle cx="12" cy="8.500" r="2" fill="#e8b93c" /><circle cx="6" cy="15.500" r="1.800" fill="#3d9b52" /><circle cx="17" cy="14" r="2.500" fill="#3b6fb8" />
          <path d="m12 18 8-16" stroke="#c98c4a" strokeWidth="2" /><path d="m18 5 1-5 5 1-3 5z" fill="#e9d3a4" />
        </I>
      </TaskApp>
      <TaskApp c="ml-[9px] w-[43px]">
        <I w={25} h={22}>
          <path d="M13 3h11v16H13z" fill="#fff" stroke="#217346" /><path d="M13 7h11M13 11h11M13 15h11M18.500 3v16" stroke="#217346" strokeWidth="1.400" />
          <path d="M0 2.500 14 0v22L0 19.500z" fill="#217346" />
          <path d="m4 7 6 8M10 7l-6 8" stroke="#fff" strokeWidth="1.800" />
        </I>
      </TaskApp>
      <TaskApp c="ml-[10px] w-[42px]">
        <I w={26} h={25}>
          <path d="M13 3c1-2 3-3 5-3 0 3 2 4 4 6 3 3 4 6 3 10-1 5-6 9-12 9S1 21 1 14c0-4 1-7 3-10l2 3c2-1 4 0 7-4z" fill="#f5622f" />
          <path d="M17 0c0 4 8 7 7 15-1 5-3 7-6 8 4-6 2-12-5-14 1-4 2-7 4-9z" fill="#fcc93b" />
          <circle cx="13" cy="14" r="5.500" fill="#7b45c0" /><path d="M6 9c3-1 5 0 8 2-3 0-3 3-6 3z" fill="#f88a2a" />
        </I>
      </TaskApp>
      <I w={12} h={8} c="ml-[354px]"><path d="m1 7 5-5.500L11 7" stroke="#ddd" strokeWidth="1.500" /></I>
      <I w={14} h={18} c="ml-[21px]">
        <rect x="1.500" y="5" width="8" height="9" rx="1" stroke="#ddd" strokeWidth="1.500" /><path d="m9.500 8 3-1.500v6L9.500 11M3 2c2-1.500 5-1.500 7 0M3 16.500c2 1.500 5 1.500 7 0" stroke="#ddd" strokeWidth="1.400" />
      </I>
      <I w={17} h={15} c="ml-[19px]"><path d="m4.500 0 4 2.700-4 2.700-4-2.700zM12.500 0l4 2.700-4 2.700-4-2.700zM4.500 5.400l4 2.700-4 2.700-4-2.700zM12.500 5.400l4 2.700-4 2.700-4-2.700zM8.500 9.500l4 2.500-4 2.700-4-2.700z" fill="#ddd" /></I>
      <I w={17} h={14} c="ml-[17px]">
        <path d="M5 4h11v8H5z" stroke="#ddd" /><path d="M7 5.500h7.500V11H7z" fill="#ddd" /><path d="M0 3h4v3H0zM2 6v4h3M1 0v3M3 0v3" stroke="#ddd" strokeWidth="1.300" />
      </I>
      <I w={14} h={14} c="ml-[20px]">
        <path d="M1 13C1 6 6 1 13 1M5 13c0-5 3-8 8-8M9 13c0-2 2-4 4-4" stroke="#bbb" strokeWidth="1.400" /><circle cx="12.500" cy="12.500" r="1.500" fill="#ddd" />
      </I>
      <I w={19} h={16} c="ml-[15px]">
        <path d="M1 5.500h3L8 2v12l-4-3.500H1zM11 5c1.500 2 1.500 4 0 6M13.500 3c3 3 3 7 0 10M16 1c4 5 4 9 0 14" stroke="#ddd" strokeWidth="1.200" />
      </I>
      <div className="ml-[20px] text-[13px] leading-[19px]">
        <T w={44}>3:18 PM</T>
        <T w={47} c="-ml-[1px]">1/2/2021</T>
      </div>
      <I w={26} h={25} c="ml-[23px] mt-[3px]">
        <path d="M0 0h17v13H9l-4 4v-4H0z" fill="#e4e4e4" /><path d="M3 4h11M3 7.500h11" stroke="#333" strokeWidth="1.200" />
        <circle cx="17" cy="16" r="7.500" fill="#2b2b2b" stroke="#777" />
        <text x="17" y="20.500" fontSize="12" textAnchor="middle" fill="#eee" fontFamily="Open Sans">2</text>
      </I>
    </div>
  );
}

function SharedScreen() {
  return (
    <div className="relative flex h-[813px] w-[1440px] flex-col overflow-hidden text-[12.500px] text-[#444]">
      <TitleBar />
      <Tabs />
      <div className="flex h-[98px] border-b border-[#cfcfcf] bg-white">
        <ClipboardGroup />
        <SlidesGroup />
        <FontGroup />
        <ParagraphGroup />
        <DrawingGroup />
        <EditingGroup />
        <I w={10} h={7} c="ml-[82px] mt-[85px]"><path d="m1 6 4-4 4 4" stroke="#666" strokeWidth="1.800" /></I>
      </div>
      <div className="flex h-[596px]">
        <Thumbnails />
        <Editor />
      </div>
      <StatusBar />
      <Taskbar />
      <ShareBar />
    </div>
  );
}

function Controls() {
  return (
    <div className="absolute bottom-0 left-0 h-[152px] w-full pt-[2px] text-[14px] text-white">
      <div className="flex h-[24px] items-center px-[30px]">
        <div className="h-[3px] w-[145px] bg-[#fb6f51]" />
        <div className="size-[24px] shrink-0 rounded-full border-2 border-[#fb6f51]" />
        <div className="h-[3px] flex-1 bg-white/15" />
      </div>
      <div className="mt-[4px] flex h-[20px] items-center justify-between pl-[30px] pr-[30px]">
        <T w={47}>0:27:27</T>
        <T w={47}>5:19:23</T>
      </div>
      <div className="mt-[14px] flex h-[40px] items-center">
        <I w={28} h={24} c="ml-[47px]">
          <path d="M1 8h4l6-6v20l-6-6H1zM14.500 8c2 2.500 2 5.500 0 8M18 5c4 4 4 10 0 14M22 2c5.500 6 5.500 14 0 20" stroke="#fff" strokeWidth="1.600" />
        </I>
        <I w={27} h={25} c="ml-[36px]">
          <path d="M1 1.500h25v18H8l-4.500 4v-4H1z" stroke="#fff" strokeWidth="1.800" />
          <path d="M4 11.500h19M4 15.500h19" stroke="#fff" strokeWidth="2" />
        </I>
        <I w={28} h={30} c="ml-[745px] mt-[4px]">
          <path d="M2 9C8-1 21-1 26 10M2 3v7h7" stroke="#fff" strokeWidth="1.900" />
          <text x="14" y="24" fontSize="15" textAnchor="middle" fill="#fff" fontFamily="Open Sans" textLength="16" lengthAdjust="spacingAndGlyphs">10</text>
        </I>
        <div className="ml-[43px] flex h-[19px] w-[11px] justify-between">
          <div className="w-[2px] bg-white" /><div className="w-[2px] bg-white" />
        </div>
        <I w={28} h={30} c="ml-[44px] mt-[4px]">
          <path d="M26 9C20-1 7-1 2 10M26 3v7h-7" stroke="#fff" strokeWidth="1.900" />
          <text x="14" y="24" fontSize="15" textAnchor="middle" fill="#fff" fontFamily="Open Sans" textLength="16" lengthAdjust="spacingAndGlyphs">30</text>
        </I>
        <I w={26} h={26} c="ml-[619px]">
          <path d="m1 25 2-7L19 2q3-2 5 0t0 5L8 23zM17 4l5 5M3 18l5 5" stroke="#fff" strokeWidth="1.700" />
        </I>
        <I w={27} h={17} c="ml-[37px]">
          <path d="M1 1h25v15H1z" stroke="#fff" strokeWidth="1.600" />
          <path d="M10.500 6h11v6.500h-11z" stroke="#fff" strokeWidth="2.200" /><path d="m12 11 3-3 3 3 3-2" stroke="#fff" />
        </I>
        <I w={26} h={26} c="ml-[36px]">
          <path d="M25 1 15 11M15 3.500V11h7.500M1 25l10-10M3.500 15H11v7.500" stroke="#fff" strokeWidth="1.700" />
        </I>
        <div className="ml-[38px] flex gap-[6px]">
          <div className="size-[3.500px] rounded-full bg-white" /><div className="size-[3.500px] rounded-full bg-white" /><div className="size-[3.500px] rounded-full bg-white" />
        </div>
      </div>
    </div>
  );
}

export default function App() {
  return (
    <div className="relative flex h-[1080px] w-[1920px] overflow-hidden bg-black font-['Open_Sans','Noto_Sans',sans-serif]">
      <div className="flex w-[1440px] flex-col bg-[#111]">
        <div className="h-[133px]">
          <div className="flex h-[40px] w-[60px] items-center justify-center bg-[#060606]">
            <I w={16} h={14}><path d="M16 7H1.500M7.500 1l-6 6 6 6" stroke="#fff" strokeWidth="1.500" /></I>
          </div>
        </div>
        <SharedScreen />
      </div>
      <div className="flex w-[480px] flex-col pl-[2px] pt-[405px]">
        <div className="flex h-[269px] flex-col items-center bg-[#111]">
          <div className="mt-[75px] flex size-[120px] shrink-0 items-center justify-center rounded-full bg-[#007b7b] text-white">
            <T w={42} c="-ml-[1px] text-[64px] font-medium leading-none">D</T>
          </div>
          <T w={239} c="ml-[13px] mt-[42px] self-start text-[20px] text-[#e2e2e2]">Dr. Mohammad Shafiul Alam</T>
        </div>
      </div>
      <div className="absolute bottom-0 left-0 h-[360px] w-full bg-[linear-gradient(to_bottom,rgba(0,0,0,0)_17%,rgba(0,0,0,0.05)_30%,rgba(0,0,0,0.17)_43%,rgba(0,0,0,0.3)_57%,rgba(0,0,0,0.4)_66%,rgba(0,0,0,0.7)_100%)]" />
      <Controls />
    </div>
  );
}
